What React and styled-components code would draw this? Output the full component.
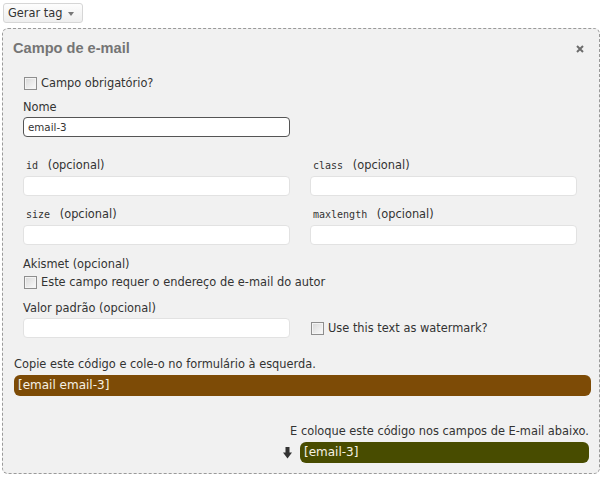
import React from "react";
import styled, { createGlobalStyle } from "styled-components";

const GlobalStyle = createGlobalStyle`
    body {
        margin: 0;
        background: #fff;
        font-family: "DejaVu Sans", Verdana, sans-serif;
        font-size: 11.4px;
        color: #333;
    }
`;

const fieldRows = [
    [
        { code: "id", id: "f-id" },
        { code: "class", id: "f-class" }
    ],
    [
        { code: "size", id: "f-size" },
        { code: "maxlength", id: "f-maxlength" }
    ]
];

const CloseIcon = () => (
    <svg width="8" height="8" viewBox="0 0 8 8">
        <path d="M1 1 L7 7 M7 1 L1 7" stroke="#6d6d6d" strokeWidth="2" />
    </svg>
);

const DownArrow = () => (
    <svg width="9" height="12" viewBox="0 0 9 12">
        <rect x="2.5" y="0" width="4" height="6" fill="#333" />
        <polygon points="0,5.5 9,5.5 4.5,11.5" fill="#333" />
    </svg>
);

const App = () => {
    return (
        <Page>
            <GlobalStyle />
            <TagButton type="button">
                Gerar tag <Caret />
            </TagButton>

            <Panel>
                <Header>
                    <Title>Campo de e-mail</Title>
                    <Close><CloseIcon /></Close>
                </Header>

                <Fields>
                    <CheckRow $top={1}>
                        <Check type="checkbox" />
                        <span>Campo obrigatório?</span>
                    </CheckRow>

                    <Label $top={9}>Nome</Label>
                    <Input $focused defaultValue="email-3" />

                    {fieldRows.map((row, i) => (
                        <Grid key={i} $top={i === 0 ? 21 : 11}>
                            {row.map((f) => (
                                <div key={f.id}>
                                    <CodeLabel>
                                        <Code>{f.code + "\u00a0"}</Code> (opcional)
                                    </CodeLabel>
                                    <Input />
                                </div>
                            ))}
                        </Grid>
                    ))}

                    <Label $top={12}>Akismet (opcional)</Label>
                    <CheckRow $top={3}>
                        <Check type="checkbox" />
                        <span>Este campo requer o endereço de e-mail do autor</span>
                    </CheckRow>

                    <Label $top={11}>Valor padrão (opcional)</Label>
                    <Grid $top={0}>
                        <Input />
                        <CheckRow $top={0}>
                            <Check type="checkbox" />
                            <span>Use this text as watermark?</span>
                        </CheckRow>
                    </Grid>
                </Fields>

                <Footer>
                    <Note>Copie este código e cole-o no formulário à esquerda.</Note>
                    <CodeBar $color="#7d4b06">[email email-3]</CodeBar>

                    <Note $right $top={28}>E coloque este código nos campos de E-mail abaixo.</Note>
                    <MailRow>
                        <DownArrow />
                        <CodeBar $color="#484c00" $width={289}>[email-3]</CodeBar>
                    </MailRow>
                </Footer>
            </Panel>
        </Page>
    );
};

const Page = styled.div`
    padding: 3px 3px 0 2px;
`;

const TagButton = styled.button`
    display: flex;
    align-items: center;
    gap: 6px;
    margin-left: 1px;
    height: 20px;
    width: 80px;
    padding: 0 0 0 4px;
    border: 1px solid #d6d6d6;
    border-radius: 3px;
    background: linear-gradient(#fdfdfd, #eeeeee);
    font-family: "DejaVu Sans", Verdana, sans-serif;
    font-size: 11.4px;
    color: #333;
`;

const Caret = styled.span`
    width: 0;
    height: 0;
    border-left: 3.5px solid transparent;
    border-right: 3.5px solid transparent;
    border-top: 4px solid #777;
    margin-top: 1px;
`;

const Panel = styled.div`
    margin-top: 5px;
    width: 598px;
    height: 446px;
    box-sizing: border-box;
    border: 1px dashed #9a9a9a;
    border-radius: 6px;
    background: #f1f1f1;
`;

const Header = styled.div`
    display: flex;
    align-items: center;
    justify-content: space-between;
    padding: 9px 15px 0 10px;
    height: 20px;
`;

const Title = styled.h3`
    margin: 0;
    font-family: "Liberation Sans", Arial, sans-serif;
    font-size: 14.6px;
    font-weight: bold;
    line-height: 20px;
    color: #757575;
`;

const Close = styled.span`
    display: flex;
    margin-top: 2px;
`;

const Fields = styled.div`
    padding: 16px 22px 0 20px;
`;

const CheckRow = styled.label`
    display: flex;
    align-items: center;
    gap: 4px;
    height: 16px;
    margin-top: ${(p) => p.$top || 0}px;
    line-height: 16px;
`;

const Check = styled.input`
    appearance: none;
    margin: 0 0 0 1px;
    width: 13px;
    height: 13px;
    box-sizing: border-box;
    border: 1px solid #8e8e8e;
    background: linear-gradient(135deg, #d8d8d8, #fbfbfb);
    box-shadow: inset 0 0 0 1px #f4f4f4;
`;

const Label = styled.div`
    height: 14px;
    margin-top: ${(p) => p.$top || 0}px;
    margin-bottom: 3px;
    line-height: 14px;
`;

const CodeLabel = styled.div`
    height: 14px;
    padding-left: 3px;
    margin-bottom: 4px;
    line-height: 14px;
    white-space: nowrap;
`;

const Code = styled.code`
    font-family: "DejaVu Sans Mono", Consolas, monospace;
    font-size: 10px;
    line-height: 10px;
`;

const Grid = styled.div`
    display: grid;
    grid-template-columns: 267px 267px;
    column-gap: 20px;
    align-items: center;
    margin-top: ${(p) => p.$top}px;
`;

const Input = styled.input`
    display: block;
    box-sizing: border-box;
    width: 267px;
    height: 20px;
    margin: 0;
    padding: 0 4px;
    border: 1px solid ${(p) => (p.$focused ? "#555" : "#e2e2e2")};
    border-radius: 4px;
    background: #fff;
    font-family: "DejaVu Sans", Verdana, sans-serif;
    font-size: 10.3px;
    color: #333;
    outline: none;
`;

const Footer = styled.div`
    padding: 19px 8px 0 11px;
`;

const Note = styled.div`
    height: 14px;
    line-height: 14px;
    margin-top: ${(p) => p.$top || 0}px;
    margin-bottom: 4px;
    text-align: ${(p) => (p.$right ? "right" : "left")};
    padding-right: ${(p) => (p.$right ? "2px" : "0")};
    white-space: nowrap;
`;

const CodeBar = styled.div`
    box-sizing: border-box;
    width: ${(p) => (p.$width ? `${p.$width}px` : "100%")};
    height: 21px;
    padding-left: 4px;
    border-radius: 6px;
    background: ${(p) => p.$color};
    color: #f6f1e4;
    font-size: 12px;
    line-height: 21px;
`;

const MailRow = styled.div`
    display: flex;
    align-items: center;
    justify-content: flex-end;
    gap: 8px;
    padding-right: 2px;
`;

export default App;
